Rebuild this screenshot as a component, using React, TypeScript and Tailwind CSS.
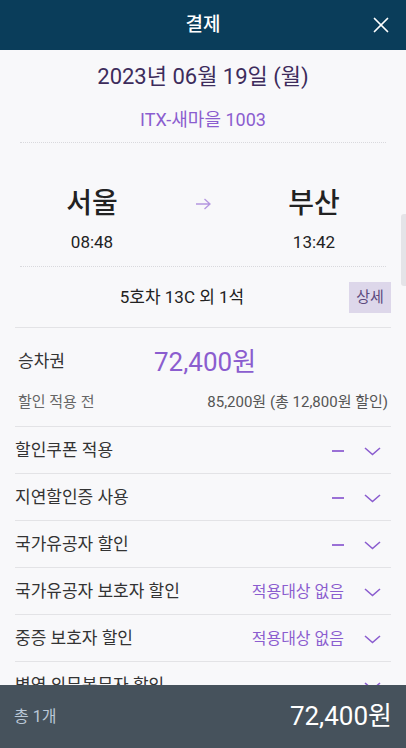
import { X } from "lucide-react";

const discounts = [
  { label: "할인쿠폰 적용", value: "" },
  { label: "지연할인증 사용", value: "" },
  { label: "국가유공자 할인", value: "" },
  { label: "국가유공자 보호자 할인", value: "적용대상 없음" },
  { label: "중증 보호자 할인", value: "적용대상 없음" },
  { label: "병역 의무복무자 할인", value: "" },
];

const font = { fontFamily: 'Roboto, "Noto Sans CJK KR", sans-serif' };

const Chevron = () => (
  <svg width="17" height="9" viewBox="0 0 17 9" fill="none" stroke="#8b5dcf" strokeWidth="1.6" className="ml-[20px] mr-[10px]">
    <path d="M1 1l7.5 6.5L16 1" />
  </svg>
);

export default function App() {
  return (
    <div className="relative flex h-[748px] w-[406px] flex-col overflow-hidden bg-[#f8f8fa] text-[#333]" style={font}>
      <header className="relative flex h-[50px] shrink-0 items-center justify-center bg-[#0a3d5a]">
        <h1 className="text-[19px] font-medium text-white">결제</h1>
        <X className="absolute right-[12px] top-[12px] h-[26px] w-[26px] text-white" strokeWidth={1.6} />
      </header>

      <main className="flex-1 overflow-hidden">
        <div className="pt-[12px] text-center">
          <p className="text-[22px] leading-[30px] text-[#3d2c5c]">2023년 06월 19일 (월)</p>
          <p className="mt-[16px] text-[18px] leading-[24px] text-[#8b5dcf]">ITX-새마을 1003</p>
        </div>

        <div className="mx-[20px] mt-[10px] border-t border-dotted border-[#d9d9dd]" />

        <div className="mt-[43px] flex">
          <div className="ml-[42px] flex w-[100px] flex-col items-center">
            <span className="text-[28px] font-medium leading-[36px] text-[#222]">서울</span>
            <span className="mt-[8px] text-[17px] leading-[24px] text-[#222]">08:48</span>
          </div>
          <div className="flex h-[36px] w-[122px] items-center justify-center">
            <svg width="16" height="12" viewBox="0 0 16 12" fill="none" stroke="#b496e0" strokeWidth="1.3">
              <path d="M1 6h14M9.5 1l5.5 5-5.5 5" />
            </svg>
          </div>
          <div className="flex w-[100px] flex-col items-center">
            <span className="text-[28px] font-medium leading-[36px] text-[#222]">부산</span>
            <span className="mt-[8px] text-[17px] leading-[24px] text-[#222]">13:42</span>
          </div>
        </div>

        <div className="mx-[20px] mt-[12px] border-t border-dotted border-[#d9d9dd]" />

        <div className="ml-[15px] mr-[15px] mt-[15px] flex items-center">
          <span className="flex-1 text-center text-[17px] text-[#222]">5호차 13C 외 1석</span>
          <button className="h-[31px] w-[42px] bg-[#ddd7ea] text-[15px] text-[#5c4a7e]">상세</button>
        </div>

        <div className="mx-[15px] mt-[14px] border-t border-[#e3e3e6]" />

        <div className="mx-[15px] px-[3px] pt-[17px]">
          <div className="flex items-center">
            <span className="w-[136px] text-[17px] text-[#333]">승차권</span>
            <span className="text-[26px] leading-[34px] text-[#8b5dcf]">72,400원</span>
          </div>
          <div className="mt-[12px] flex items-center justify-between pb-[13px] text-[15px] leading-[22px] text-[#555]">
            <span className="text-[#666]">할인 적용 전</span>
            <span>85,200원 (총 12,800원 할인)</span>
          </div>
        </div>

        <ul className="mx-[15px] border-t border-[#e3e3e6]">
          {discounts.map((d) => (
            <li key={d.label} className="flex h-[47px] items-center border-b border-[#e3e3e6] pt-[2px]">
              <span className="flex-1 text-[17px] text-[#333]">{d.label}</span>
              {d.value ? (
                <span className="text-[16px] text-[#8b5dcf]">{d.value}</span>
              ) : (
                <span className="h-[2px] w-[12px] bg-[#9a70d6]" />
              )}
              <Chevron />
            </li>
          ))}
        </ul>
      </main>

      <footer className="flex h-[63px] shrink-0 items-center justify-between bg-[#46525c] px-[14px]">
        <span className="text-[16px] text-[#b9c7d6]">총 1개</span>
        <span className="text-[26px] text-white">72,400원</span>
      </footer>

      <div className="absolute right-0 top-[214px] h-[72px] w-[5px] rounded-l-[3px] bg-[#e4e4e8]" />
    </div>
  );
}
